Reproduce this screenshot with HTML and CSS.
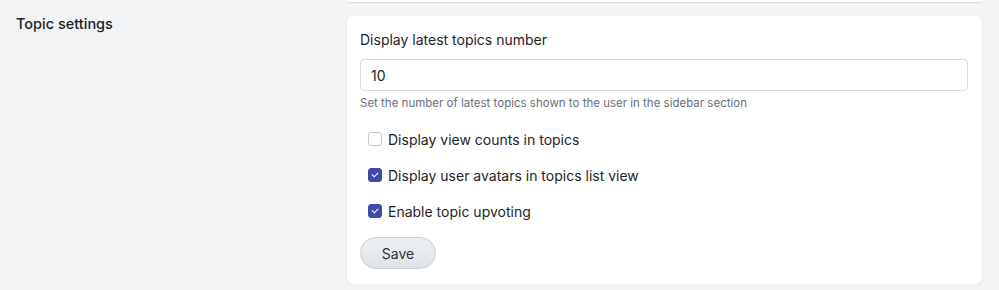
FILE: index.html
```html
<!DOCTYPE html>
<html lang="en">
<head>
    <meta charset="UTF-8">
    <meta name="viewport" content="width=device-width, initial-scale=1.0">
    <title>Topic settings</title>
    <link rel="stylesheet" href="styles.css">
</head>
<body>
    <div class="settings-page">
        <div class="card card-prev"></div>

        <div class="settings-row">
            <div class="settings-label">Topic settings</div>
            <form class="card" id="topic-form">
                <div class="form-group">
                    <label for="latest-number">Display latest topics number</label>
                    <input type="text" id="latest-number" value="10">
                    <p class="help-text">Set the number of latest topics shown to the user in the sidebar section</p>
                </div>
                <label class="check-row">
                    <input type="checkbox" id="view-counts">
                    <span>Display view counts in topics</span>
                </label>
                <label class="check-row">
                    <input type="checkbox" id="user-avatars" checked>
                    <span>Display user avatars in topics list view</span>
                </label>
                <label class="check-row">
                    <input type="checkbox" id="upvoting" checked>
                    <span>Enable topic upvoting</span>
                </label>
                <button type="submit" class="save-btn">Save</button>
            </form>
        </div>
    </div>
</body>
</html>
```

FILE: styles.css
```css
body {
    font-family: 'Inter', 'Liberation Sans', sans-serif;
    margin: 0;
    padding: 0;
    background-color: #f3f4f6;
    color: #1f2328;
}
.settings-page {
    display: flex;
    flex-direction: column;
    gap: 14px;
    padding: 0 17px 0 16px;
}
.settings-row {
    display: grid;
    grid-template-columns: 331px 1fr;
}
.settings-label {
    font-size: 14.5px;
    font-weight: 500;
    line-height: 16px;
    color: #222;
}
.card {
    background: #fff;
    border-radius: 6px;
    box-shadow: 0 1px 2px rgba(0, 0, 0, 0.12);
    padding: 14px 14px 15px 13px;
    margin: 0;
}
.card-prev {
    height: 2px;
    padding: 0;
    margin-left: 331px;
    border-radius: 0 0 6px 6px;
}
.form-group label {
    display: block;
    font-size: 14px;
    line-height: 20px;
    margin-bottom: 9px;
}
.form-group input {
    display: block;
    box-sizing: border-box;
    width: 100%;
    height: 32px;
    padding: 0 10px;
    border: 1px solid #d8dadd;
    border-radius: 4px;
    font-family: inherit;
    font-size: 14px;
    color: #1f2328;
}
.help-text {
    margin: 4px 0 10px;
    font-size: 11.5px;
    line-height: 16px;
    color: #6b7078;
}
.check-row {
    display: flex;
    align-items: center;
    height: 36px;
    padding-left: 8px;
    font-size: 14px;
    cursor: pointer;
}
.check-row input {
    appearance: none;
    width: 14px;
    height: 14px;
    margin: 0 6px 0 0;
    border: 1px solid #c3c6cc;
    border-radius: 3px;
    background: #fff;
    display: grid;
    place-items: center;
}
.check-row input:checked {
    background: #3c4ca8;
    border-color: #3c4ca8;
}
.check-row input:checked::after {
    content: '';
    width: 5px;
    height: 3px;
    border-left: 1.5px solid #fff;
    border-bottom: 1.5px solid #fff;
    transform: translateY(-1px) rotate(-45deg);
}
.save-btn {
    margin-top: 8px;
    width: 76px;
    height: 32px;
    border: 1px solid #c9ced6;
    border-radius: 16px;
    background: linear-gradient(#eef0f3, #dfe3e9);
    font-family: inherit;
    font-size: 14px;
    color: #333;
    cursor: pointer;
}
```
